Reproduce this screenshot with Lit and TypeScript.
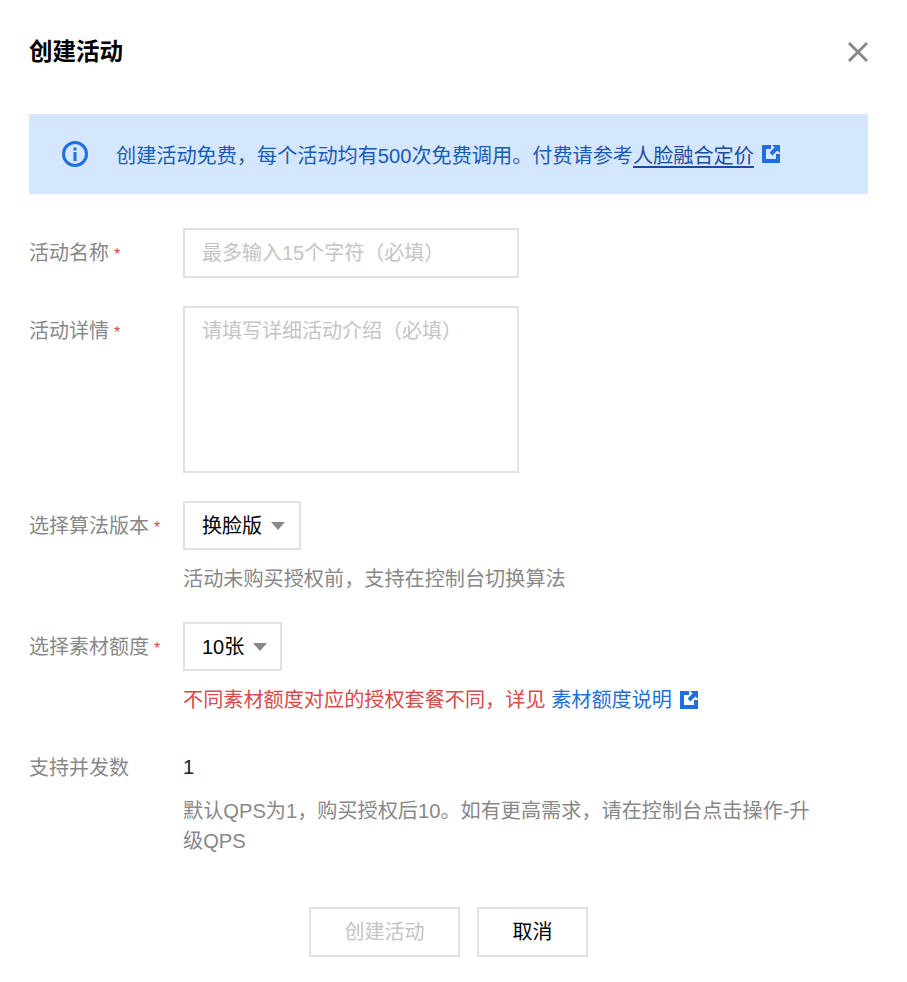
import { LitElement, html, css } from "lit";
import { customElement } from "lit/decorators.js";

const ext = () => html`<svg class="ext" viewBox="0 0 18 18" width="18" height="18"><path fill="#1f6fe0" fill-rule="evenodd" d="M0 0h9v4H4v10h10V9h4v9H0z"/><path fill="#1f6fe0" d="M10 0h8v8l-2.600-2.600-5 5-2.800-2.800 5-5z"/></svg>`;

@customElement("app-root")
export class AppRoot extends LitElement {
  static styles = css`
    :host {
      display: block;
      width: 907px;
      height: 982px;
      background: #fff;
      box-sizing: border-box;
      padding: 34px 38px 0 29px;
      font-family: "Liberation Sans", "Noto Sans CJK SC", sans-serif;
      font-size: 20.15px;
      color: #000;
    }
    .head { display: flex; justify-content: space-between; align-items: center; height: 36px; }
    h1 { margin: 0; font-size: 23.5px; font-weight: 700; line-height: 36px; color: #000; }
    .close { display: block; }
    .alert {
      margin: 44px 1px 0 0; height: 80px; background: #d5e7ff; color: #1a5bb5;
      display: flex; align-items: center; padding-left: 32px; box-sizing: border-box;
    }
    .alert .info { margin-right: 27px; flex: none; }
    .alert a { color: #1a4c9c; text-decoration: underline; text-underline-offset: 3px; }
    .ext { flex: none; display: block; }
    .alert .ext { margin-left: 8px; }
    form { display: block; margin-top: 34px; }
    .row { display: flex; margin-bottom: 28px; }
    .label { width: 154px; flex: none; color: #888; font-size: 20px; line-height: 50px; height: 50px; white-space: nowrap; }
    .star { color: #d94a4a; font-size: 16px; margin-left: 5px; vertical-align: 0; }
    .box { border: 2px solid #e2e2e2; box-sizing: border-box; color: #c4c4c4; font-size: 20px; padding-left: 17px; width: 336px; }
    .input { height: 50px; line-height: 46px; }
    .area { height: 167px; line-height: 46px; }
    .select {
      display: flex; width: fit-content; align-items: center; height: 49px; box-sizing: border-box;
      border: 2px solid #e2e2e2; padding: 0 14px 2px 17px; font-size: 20px; color: #000; gap: 9px;
    }
    .select.narrow { padding-right: 13px; }
    .caret { width: 0; height: 0; border-left: 7px solid transparent; border-right: 7px solid transparent; border-top: 8px solid #888; margin-top: 2px; }
    .hint { color: #888; line-height: 30px; margin-top: 14px; width: 640px; }
    .warn { color: #d94a4a; display: flex; align-items: center; line-height: 30px; margin-top: 14px; white-space: pre; }
    .warn a { color: #1f6fd6; }
    .warn .ext { margin-left: 8px; }
    .value { color: #222; line-height: 30px; padding-top: 9px; }
    .actions { display: flex; gap: 17px; margin-top: 51px; padding-left: 280px; }
    .btn {
      height: 50px; box-sizing: border-box; border: 2px solid #e2e2e2; background: #fff;
      font: inherit; font-size: 20px; line-height: 46px; text-align: center; padding: 0;
    }
    .primary { width: 151px; color: #c4c4c4; }
    .cancel { width: 111px; color: #000; }
  `;

  private star() { return html`<span class="star">*</span>`; }

  render() {
    return html`
      <div class="head">
        <h1>创建活动</h1>
        <svg class="close" viewBox="0 0 22 22" width="22" height="22"><path d="M2 2l18 18M20 2L2 20" stroke="#888" stroke-width="3" fill="none"/></svg>
      </div>
      <div class="alert">
        <svg class="info" viewBox="0 0 28 28" width="28" height="28">
          <circle cx="14" cy="14" r="11.500" fill="none" stroke="#1f6fe0" stroke-width="3"/>
          <rect x="12.500" y="12" width="3" height="9" fill="#1f6fe0"/>
          <rect x="12.500" y="7.500" width="3" height="3" fill="#1f6fe0"/>
        </svg>
        <span>创建活动免费，每个活动均有500次免费调用。付费请参考<a>人脸融合定价</a></span>
        ${ext()}
      </div>
      <form>
        <div class="row">
          <div class="label">活动名称${this.star()}</div>
          <div class="box input">最多输入15个字符（必填）</div>
        </div>
        <div class="row">
          <div class="label">活动详情${this.star()}</div>
          <div class="box area">请填写详细活动介绍（必填）</div>
        </div>
        <div class="row">
          <div class="label">选择算法版本${this.star()}</div>
          <div>
            <div class="select">换脸版<span class="caret"></span></div>
            <div class="hint">活动未购买授权前，支持在控制台切换算法</div>
          </div>
        </div>
        <div class="row">
          <div class="label">选择素材额度${this.star()}</div>
          <div>
            <div class="select narrow">10张<span class="caret"></span></div>
            <div class="warn">不同素材额度对应的授权套餐不同，详见 <a>素材额度说明</a>${ext()}</div>
          </div>
        </div>
        <div class="row">
          <div class="label">支持并发数</div>
          <div>
            <div class="value">1</div>
            <div class="hint">默认QPS为1，购买授权后10。如有更高需求，请在控制台点击操作-升级QPS</div>
          </div>
        </div>
      </form>
      <div class="actions">
        <button class="btn primary" type="button">创建活动</button>
        <button class="btn cancel" type="button">取消</button>
      </div>
    `;
  }
}
